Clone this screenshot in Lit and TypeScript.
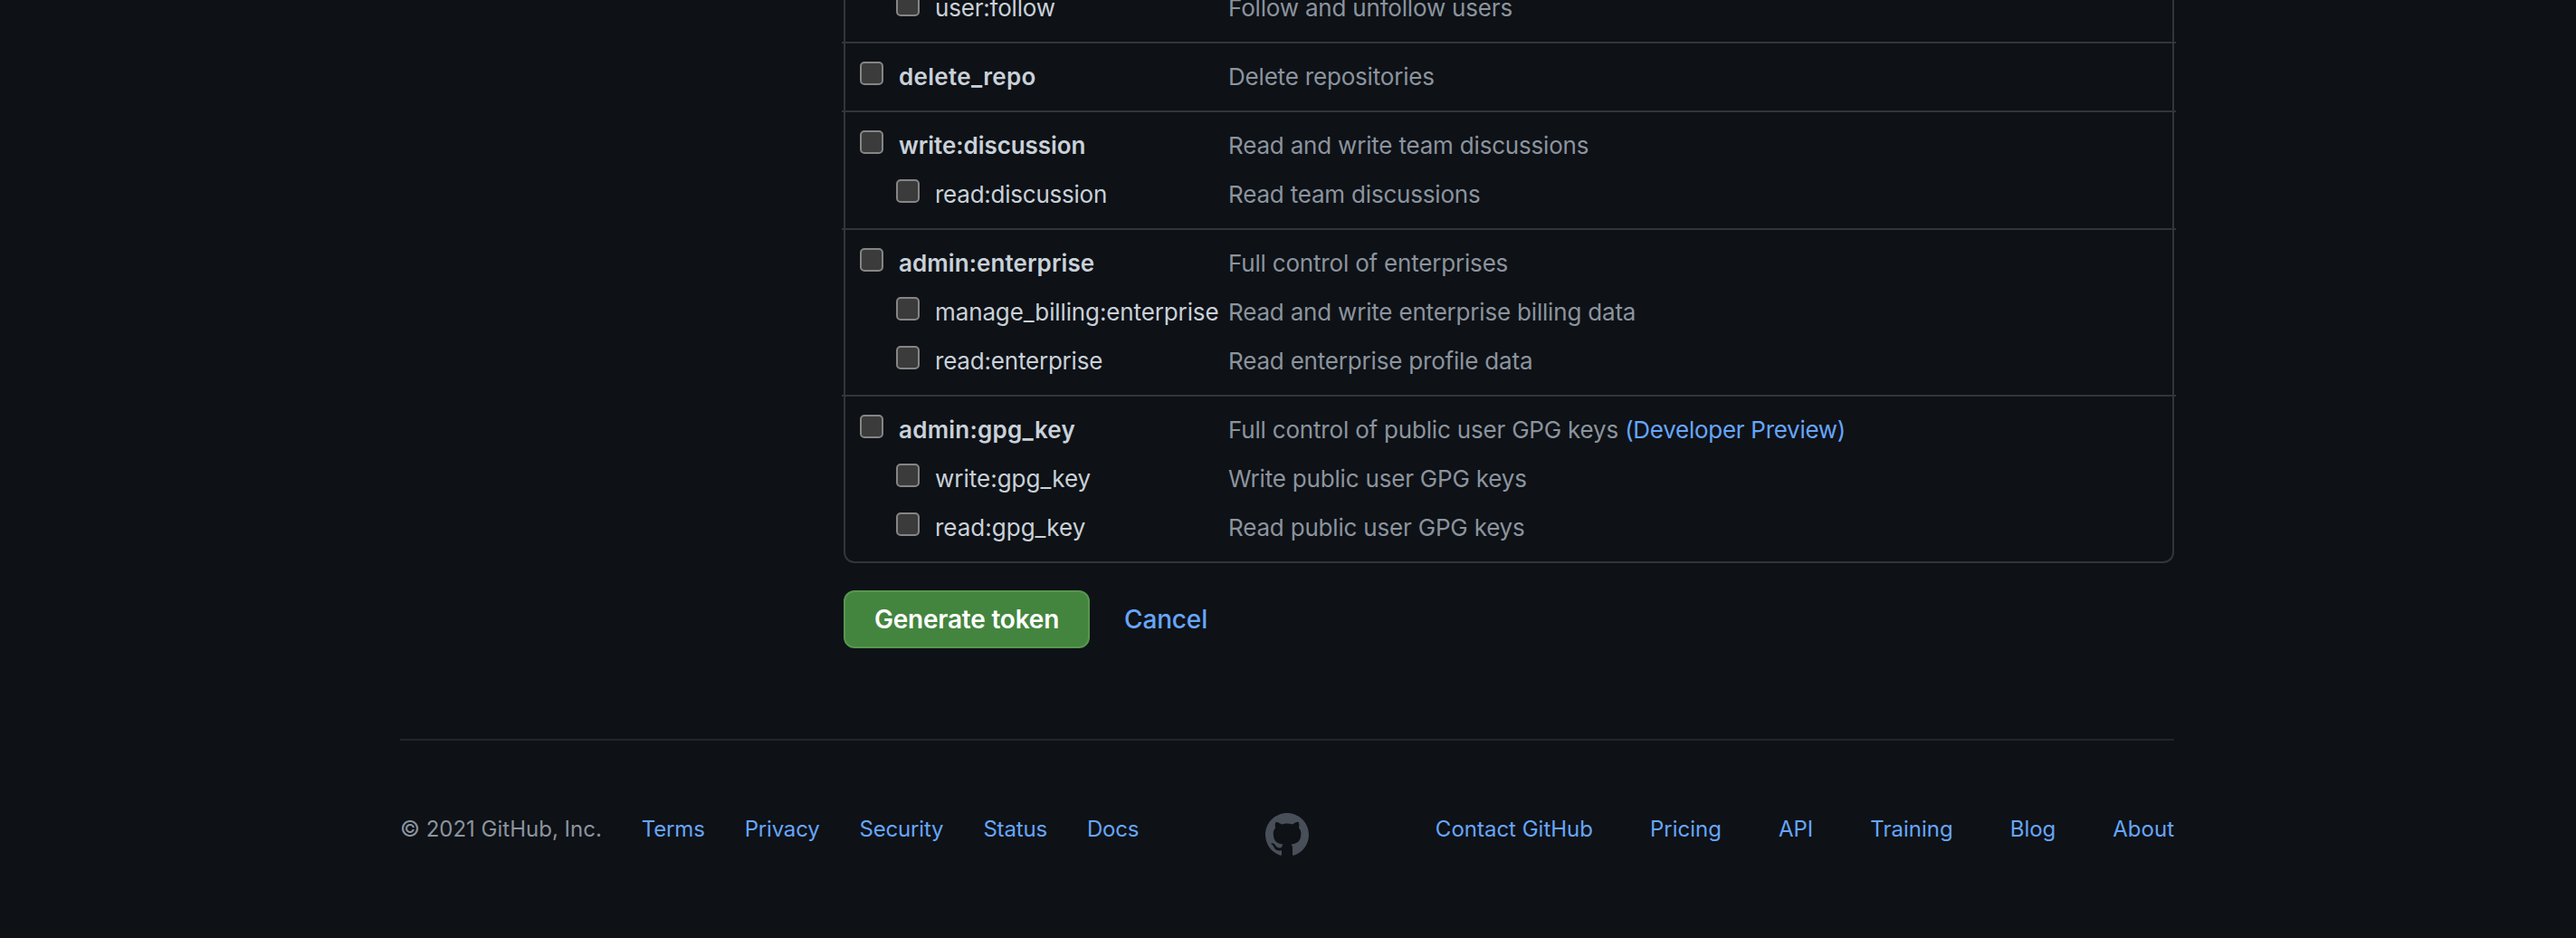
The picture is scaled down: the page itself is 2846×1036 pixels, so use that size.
import { LitElement, html, css, nothing } from "lit";
import { customElement } from "lit/decorators.js";
import { styleMap } from "lit/directives/style-map.js";

interface Scope {
  name: string;
  desc: string;
  link?: string;
  child?: boolean;
  /** letter spacing of the name, px */
  track?: number;
}

const GROUPS: Scope[][] = [
  [{ name: "user:follow", desc: "Follow and unfollow users", child: true, track: -0.2 }],
  [{ name: "delete_repo", desc: "Delete repositories", track: 0.3 }],
  [
    { name: "write:discussion", desc: "Read and write team discussions", track: -0.05 },
    { name: "read:discussion", desc: "Read team discussions", child: true, track: -0.24 },
  ],
  [
    { name: "admin:enterprise", desc: "Full control of enterprises", track: 0.08 },
    { name: "manage_billing:enterprise", desc: "Read and write enterprise billing data", child: true, track: -0.12 },
    { name: "read:enterprise", desc: "Read enterprise profile data", child: true, track: -0.2 },
  ],
  [
    { name: "admin:gpg_key", desc: "Full control of public user GPG keys", link: "(Developer Preview)", track: 0.25 },
    { name: "write:gpg_key", desc: "Write public user GPG keys", child: true },
    { name: "read:gpg_key", desc: "Read public user GPG keys", child: true },
  ],
];

const LEFT_LINKS = ["Terms", "Privacy", "Security", "Status", "Docs"];
const RIGHT_LINKS = ["Contact GitHub", "Pricing", "API", "Training", "Blog", "About"];

@customElement("app-root")
export class AppRoot extends LitElement {
  static styles = css`
    :host {
      display: block;
      height: 1036px;
      overflow: hidden;
      background: #0e1116;
      color: #c9d1d9;
      font-family: Inter, "Liberation Sans", sans-serif;
      font-size: 26px;
      line-height: 35px;
    }
    * { box-sizing: border-box; }
    a { color: #66a6fb; text-decoration: none; }
    .page { width: 1960px; margin-left: 442px; height: 1036px; display: flex; flex-direction: column; }
    .main { margin-left: 490px; display: flex; flex-direction: column; height: 816px; justify-content: flex-end; padding-bottom: 100px; }
    .scopes { flex: none; border: 2px solid #32363b; border-top: none; border-radius: 0 0 12px 12px; }
    .group { margin: 0 -4px; padding: 10px 4px; border-top: 2px solid #32363b; }
    .row { display: flex; height: 54px; padding: 9px 0 9px 16px; }
    .child { padding-left: 56px; }
    .box { flex: none; width: 26px; height: 26px; margin-top: 1px; border: 2px solid #858585; border-radius: 5px; background: #3b3b3b; }
    .name { flex: none; width: 364px; margin-left: 17px; white-space: nowrap; font-weight: 600; }
    .child .name { width: 324px; font-weight: 400; }
    .desc { color: #8b949e; white-space: nowrap; letter-spacing: -0.19px; }
    .desc a { letter-spacing: -0.28px; }
    .actions { display: flex; align-items: center; gap: 38px; margin-top: 30px; height: 64px; flex: none; }
    .submit { width: 272px; height: 64px; border: 2px solid #57964f; border-radius: 12px; background: #43853f; color: #fff; font: 600 28px/40px Inter, sans-serif; letter-spacing: -0.2px; padding: 0; }
    .cancel { font-size: 28px; font-weight: 500; letter-spacing: -0.15px; }
    .footer { border-top: 2px solid #21262d; height: 220px; display: flex; padding-top: 80px; font-size: 24px; flex: none; }
    .links { display: flex; color: #8b949e; white-space: nowrap; }
    .left { flex: none; width: 956px; gap: 44px; }
    .left a { letter-spacing: -0.18px; }
    .right { gap: 63px; margin-left: auto; }
    .mark { flex: none; width: 48px; height: 48px; fill: #484f58; }
  `;

  private row(scope: Scope) {
    return html`<label class="row ${scope.child ? "child" : ""}">
      <span class="box"></span>
      <span class="name" style=${styleMap({ letterSpacing: `${scope.track ?? 0}px` })}>${scope.name}</span>
      <span class="desc">${scope.desc}${scope.link ? html` <a>${scope.link}</a>` : nothing}</span>
    </label>`;
  }

  render() {
    return html`<div class="page">
      <div class="main">
        <div class="scopes">
          ${GROUPS.map((g) => html`<div class="group">${g.map((s) => this.row(s))}</div>`)}
        </div>
        <div class="actions">
          <button class="submit">Generate token</button>
          <a class="cancel">Cancel</a>
        </div>
      </div>
      <div class="footer">
        <div class="links left"><span>© 2021 GitHub, Inc.</span>${LEFT_LINKS.map((t) => html`<a>${t}</a>`)}</div>
        <svg class="mark" viewBox="0 0 16 16"><path fill-rule="evenodd" d="M8 0C3.58 0 0 3.58 0 8c0 3.54 2.29 6.53 5.47 7.59.4.07.55-.17.55-.38 0-.19-.01-.82-.01-1.49-2.01.37-2.53-.49-2.69-.94-.09-.23-.48-.94-.82-1.13-.28-.15-.68-.52-.01-.53.63-.01 1.08.58 1.23.82.72 1.21 1.87.87 2.33.66.07-.52.28-.87.51-1.07-1.78-.2-3.64-.89-3.64-3.95 0-.87.31-1.59.82-2.15-.08-.2-.36-1.02.08-2.12 0 0 .67-.21 2.2.82.64-.18 1.32-.27 2-.27.68 0 1.36.09 2 .27 1.53-1.04 2.2-.82 2.2-.82.44 1.1.16 1.92.08 2.12.51.56.82 1.27.82 2.15 0 3.07-1.87 3.75-3.65 3.95.29.25.54.73.54 1.48 0 1.07-.01 1.93-.01 2.2 0 .21.15.46.55.38A8.013 8.013 0 0016 8c0-4.42-3.58-8-8-8z"></path></svg>
        <div class="links right">${RIGHT_LINKS.map((t) => html`<a>${t}</a>`)}</div>
      </div>
    </div>`;
  }
}
